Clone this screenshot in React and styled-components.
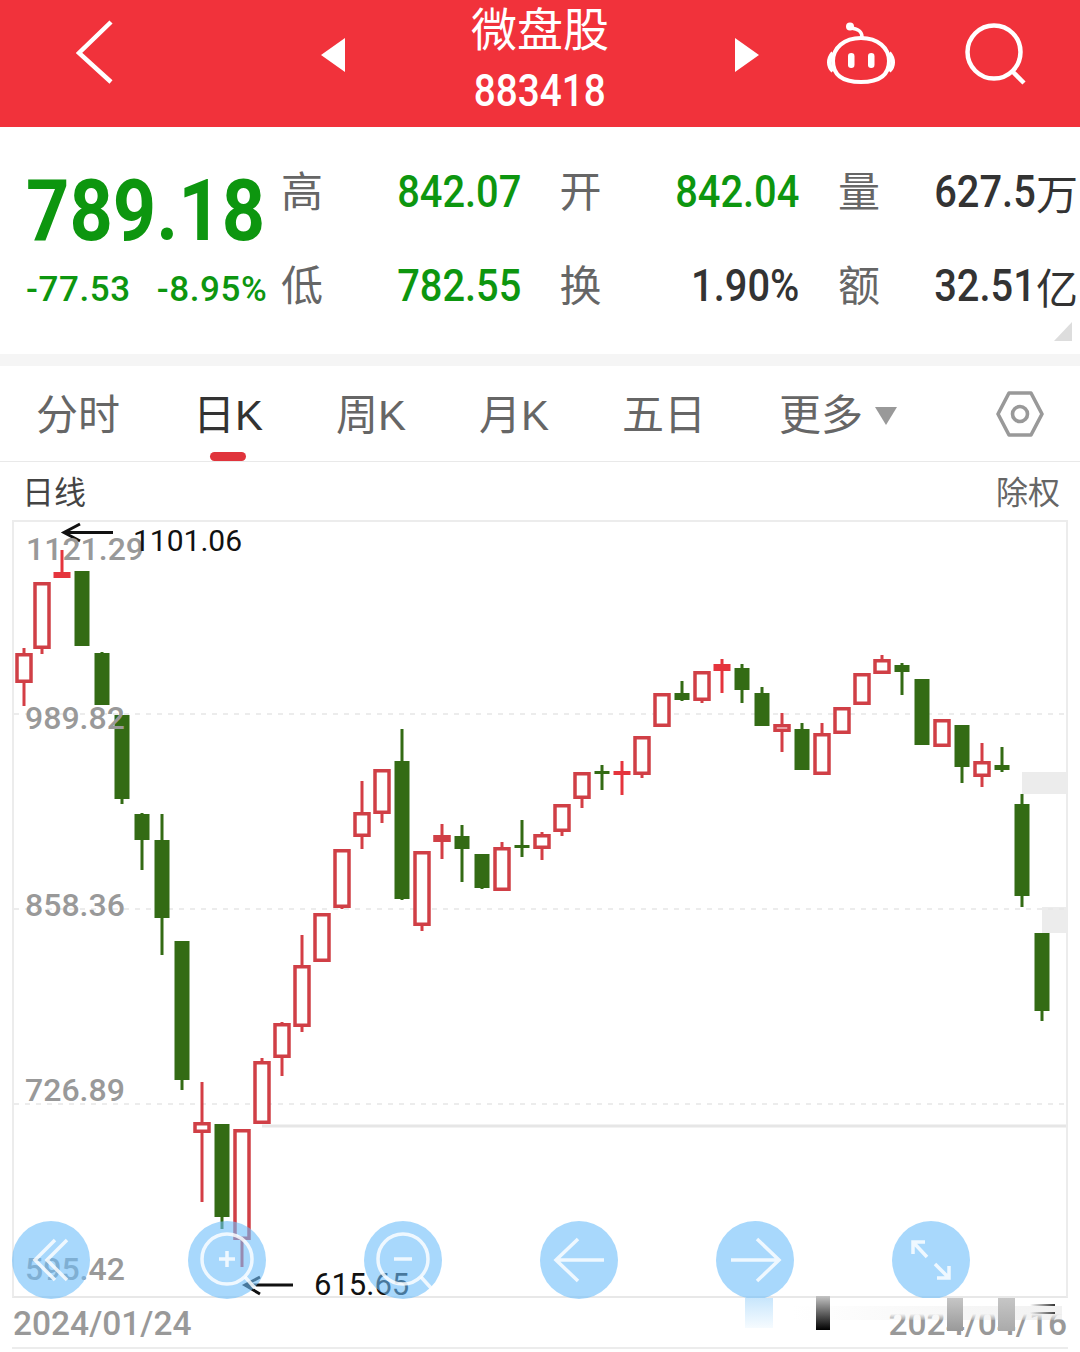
import React from "react";
import styled, { createGlobalStyle } from "styled-components";

const GlobalStyle = createGlobalStyle`
  html, body {
    margin: 0;
    padding: 0;
    background: #fff;
  }
  body {
    font-family: "Roboto", "Noto Sans CJK SC", sans-serif;
  }
`;

const CJK = `"Noto Sans CJK SC", sans-serif`;
const NUM = `"Roboto", "Noto Sans CJK SC", sans-serif`;
const GREEN = "#0d960f";

const Page = styled.div`
  width: 1080px;
  height: 1352px;
  overflow: hidden;
  background: #fff;
`;

// Header
const Header = styled.header`
  height: 127px;
  box-sizing: border-box;
  padding: 0 52px 0 76px;
  display: flex;
  align-items: flex-start;
  background: #f1323b;
  color: #fff;
`;
const BackSlot = styled.div`
  width: 245px;
  height: 104px;
  display: flex;
  align-items: center;
`;
const StockSwitcher = styled.div`
  width: 438px;
  height: 110px;
  display: flex;
  align-items: center;
  justify-content: space-between;
`;
const Arrow = styled.span`
  width: 0;
  height: 0;
  border-top: 17px solid transparent;
  border-bottom: 17px solid transparent;
  border-left: ${(props) => (props.$right ? "24px solid #fff" : "0")};
  border-right: ${(props) => (props.$right ? "0" : "24px solid #fff")};
`;
const TitleBlock = styled.div`
  width: 140px;
  padding-top: 1px;
  align-self: flex-start;
  display: flex;
  flex-direction: column;
  align-items: center;
`;
const Title = styled.div`
  font-family: ${CJK};
  font-size: 46px;
  line-height: 50px;
  white-space: nowrap;
`;
const Code = styled.div`
  margin-top: 15px;
  font-family: ${NUM};
  font-size: 45px;
  font-weight: 500;
  line-height: 50px;
  transform: scaleX(0.86);
`;
const Actions = styled.div`
  margin-left: auto;
  height: 108px;
  display: flex;
  align-items: center;
  gap: 68px;
`;

// Quote
const QuotePanel = styled.section`
  position: relative;
  height: 227px;
  display: flex;
  background: #fff;
`;
const PriceBlock = styled.div`
  flex: 0 0 255px;
  min-width: 0;
  margin-left: 26px;
  padding-top: 44px;
  color: ${GREEN};
`;
const Price = styled.div`
  font-family: ${NUM};
  font-size: 86px;
  font-weight: 700;
  line-height: 80px;
  white-space: nowrap;
  transform: scaleX(0.88);
  transform-origin: left center;
`;
const ChangeRow = styled.div`
  margin-top: 19px;
  display: flex;
  gap: 26px;
  font-family: ${NUM};
  font-size: 35px;
  font-weight: 500;
  letter-spacing: 0.6px;
  line-height: 40px;
  white-space: nowrap;
`;
const StatsGrid = styled.div`
  padding-top: 17px;
  display: grid;
  grid-template-columns: 42px 198px 80.5px 198px 80.5px 198px;
  grid-auto-rows: 94px;
  align-items: center;
`;
const StatLabel = styled.div`
  justify-self: end;
  margin-top: -5px;
  font-family: ${CJK};
  font-size: 42px;
  line-height: 50px;
  color: #666;
  white-space: nowrap;
`;
const StatValue = styled.div`
  display: flex;
  justify-content: flex-end;
  align-items: center;
  padding-top: 2px;
  color: ${(props) => (props.$green ? GREEN : "#333")};
  font-family: ${NUM};
  font-size: 45px;
  font-weight: 500;
  line-height: 50px;
  white-space: nowrap;
`;
const Squeezed = styled.span`
  display: inline-block;
  transform: scaleX(0.885);
  transform-origin: right center;
`;
const Unit = styled.span`
  font-family: ${CJK};
  font-size: 42px;
  font-weight: 400;
`;
const Corner = styled.span`
  position: absolute;
  right: 8px;
  bottom: 13px;
  width: 18px;
  height: 19px;
  background: #ddd;
  clip-path: polygon(100% 0, 100% 100%, 0 100%);
`;
const Divider = styled.div`
  height: 12px;
  background: #f5f5f5;
`;

// Tabs
const TabBar = styled.nav`
  height: 96px;
  box-sizing: border-box;
  padding: 5px 36px 0 36px;
  display: flex;
  align-items: center;
  gap: 73px;
  border-bottom: 1px solid #e9e9e9;
`;
const Tab = styled.div`
  position: relative;
  display: flex;
  align-items: center;
  font-family: "Liberation Sans", ${CJK};
  font-size: 42px;
  line-height: 50px;
  color: ${(props) => (props.$active ? "#333" : "#666")};
  white-space: nowrap;
`;
const TabMark = styled.span`
  position: absolute;
  left: 17px;
  bottom: -20px;
  width: 36px;
  height: 9px;
  border-radius: 5px;
  background: #e0343c;
`;
const Caret = styled.span`
  margin-left: 12px;
  width: 0;
  height: 0;
  border-left: 11px solid transparent;
  border-right: 11px solid transparent;
  border-top: 18px solid #999;
`;
const SettingsSlot = styled.div`
  margin-left: auto;
  margin-top: -5px;
  display: flex;
`;

// Sub header
const SubHeader = styled.div`
  height: 58px;
  box-sizing: border-box;
  padding: 0 20px 2px 22px;
  display: flex;
  align-items: center;
  justify-content: space-between;
  font-family: ${CJK};
  font-size: 32px;
  line-height: 40px;
  color: #444;
`;
const SubRight = styled.span`
  color: #666;
`;

// Chart
const ChartFrame = styled.section`
  position: relative;
  width: 1056px;
  height: 778px;
  box-sizing: border-box;
  margin-left: 12px;
  border: 2px solid #ececec;
  border-bottom-color: #e8e8e8;
`;
const ChartSvg = styled.svg`
  display: block;
`;
const AxisLabel = styled.span`
  position: absolute;
  left: ${(props) => props.$left}px;
  top: ${(props) => props.$top}px;
  font-family: ${NUM};
  font-size: 32px;
  font-weight: 500;
  line-height: 32px;
  color: #999;
`;
const Annotation = styled.span`
  position: absolute;
  left: ${(props) => props.$left}px;
  top: ${(props) => props.$top}px;
  font-family: ${NUM};
  font-size: ${(props) => props.$size}px;
  line-height: 32px;
  color: #111;
`;
const ToolRow = styled.div`
  position: absolute;
  left: -2px;
  bottom: -3px;
  display: flex;
  gap: 98px;
`;
const ToolButton = styled.div`
  width: 78px;
  height: 78px;
  border-radius: 50%;
  background: rgba(110, 190, 250, 0.6);
  display: flex;
`;

// Dates
const DateRow = styled.div`
  position: relative;
  width: 1056px;
  height: 51px;
  box-sizing: border-box;
  margin-left: 12px;
  padding: 8px 1px 0;
  display: flex;
  justify-content: space-between;
  border-bottom: 2px solid #ececec;
  font-family: ${NUM};
  font-size: 33.5px;
  font-weight: 500;
  line-height: 36px;
  color: #999;
`;
const SmearFade = styled.div`
  position: absolute;
  left: 720px;
  right: 0;
  top: 0;
  height: 22px;
  background: linear-gradient(to bottom, #fff 72%, rgba(255, 255, 255, 0));
`;
const SmearBar = styled.div`
  position: absolute;
  left: ${(props) => props.$left}px;
  top: ${(props) => props.$top}px;
  width: ${(props) => props.$width}px;
  height: ${(props) => props.$height}px;
  background: ${(props) => props.$bg};
`;

// colour, wick top, body top, body bottom, wick bottom
const candles = [
  ["r", 648, 653, 683, 706],
  ["r", 582, 582, 649, 654],
  ["s", 550, 572, 578, 578],
  ["g", 571, 571, 646, 646],
  ["g", 652, 653, 705, 705],
  ["g", 715, 715, 799, 804],
  ["g", 813, 814, 840, 870],
  ["g", 814, 840, 918, 955],
  ["g", 941, 941, 1080, 1090],
  ["r", 1082, 1122, 1133, 1202],
  ["g", 1124, 1124, 1217, 1229],
  ["r", 1129, 1129, 1240, 1267],
  ["r", 1058, 1061, 1124, 1124],
  ["r", 1022, 1023, 1058, 1076],
  ["r", 935, 965, 1027, 1032],
  ["r", 913, 913, 962, 962],
  ["r", 849, 849, 908, 909],
  ["r", 781, 812, 837, 849],
  ["r", 769, 769, 814, 823],
  ["g", 729, 761, 899, 900],
  ["r", 851, 851, 926, 931],
  ["r", 824, 835, 842, 859],
  ["g", 825, 836, 849, 882],
  ["g", 854, 854, 888, 889],
  ["r", 842, 847, 891, 891],
  ["g", 820, 845, 848, 857],
  ["r", 832, 834, 849, 860],
  ["r", 804, 804, 832, 836],
  ["r", 772, 772, 799, 808],
  ["g", 765, 771, 774, 790],
  ["s", 761, 771, 775, 795],
  ["r", 736, 736, 775, 778],
  ["r", 693, 693, 727, 727],
  ["g", 681, 693, 700, 701],
  ["r", 671, 671, 701, 703],
  ["s", 659, 664, 671, 693],
  ["g", 664, 668, 690, 703],
  ["g", 687, 693, 726, 726],
  ["r", 713, 724, 732, 752],
  ["g", 723, 729, 770, 770],
  ["r", 723, 733, 775, 775],
  ["r", 707, 707, 734, 734],
  ["r", 673, 673, 705, 705],
  ["r", 655, 659, 674, 674],
  ["g", 663, 665, 672, 695],
  ["g", 679, 679, 745, 745],
  ["r", 719, 719, 747, 747],
  ["g", 725, 725, 767, 783],
  ["r", 743, 761, 777, 787],
  ["g", 747, 765, 770, 772],
  ["g", 794, 804, 896, 907],
  ["g", 933, 933, 1011, 1021],
];

const Candle = ({ index, kind, wickTop, top, bottom, wickBottom }) => {
  const x = index === 0 ? 24 : 22 + index * 20;
  if (kind === "g") {
    return (
      <g fill="#336b14">
        <rect x={x - 1.5} y={wickTop} width="3" height={wickBottom - wickTop} />
        <rect x={x - 7.5} y={top} width="15" height={bottom - top} />
      </g>
    );
  }
  if (kind === "s") {
    return (
      <g fill="#e5343c">
        <rect x={x - 1.5} y={wickTop} width="3" height={wickBottom - wickTop} />
        <rect x={x - 8.5} y={top} width="17" height={bottom - top} />
      </g>
    );
  }
  return (
    <g>
      <rect x={x - 1.5} y={wickTop} width="3" height={wickBottom - wickTop} fill="#d43e45" />
      <rect
        x={x - 7}
        y={top + 1.75}
        width="14"
        height={bottom - top - 3.5}
        fill="#fff"
        stroke="#d03f46"
        strokeWidth="3.5"
      />
    </g>
  );
};

const BackIcon = () => (
  <svg width="38" height="64" viewBox="0 0 38 64" fill="none">
    <path d="M35 2 L3 33 L35 62" stroke="#fff" strokeWidth="4.5" />
  </svg>
);

const RobotIcon = () => (
  <svg width="70" height="66" viewBox="0 0 70 66" fill="none" stroke="#fff">
    <circle cx="24" cy="5.5" r="4" fill="#fff" stroke="none" />
    <path d="M25 7 C32 8 36 10 36 16" strokeWidth="3.5" />
    <path
      d="M35 17 C52 17 63 27 63 40 C63 55 52 61 35 61 C18 61 7 55 7 40 C7 27 18 17 35 17 Z"
      strokeWidth="4"
    />
    <path d="M7 32 C2 38 2 45 7 50 M63 32 C68 38 68 45 63 50" strokeWidth="4.5" />
    <rect x="22" y="32" width="6.5" height="15" rx="3.2" fill="#fff" stroke="none" />
    <rect x="42" y="32" width="6.5" height="15" rx="3.2" fill="#fff" stroke="none" />
  </svg>
);

const SearchIcon = () => (
  <svg width="64" height="62" viewBox="0 0 64 62" fill="none" stroke="#fff">
    <circle cx="30" cy="29" r="26.5" strokeWidth="4.5" />
    <path d="M48 48 L60 60" strokeWidth="4.5" />
  </svg>
);

const SettingsIcon = () => (
  <svg width="48" height="46" viewBox="0 0 48 46" fill="none" stroke="#999" strokeWidth="3.6">
    <path d="M13 2 H35 L46 23 L35 44 H13 L2 23 Z" strokeLinejoin="round" />
    <circle cx="24" cy="23" r="7.5" />
  </svg>
);

const ToolIcon = ({ children }) => (
  <svg
    width="78"
    height="78"
    viewBox="0 0 78 78"
    fill="none"
    stroke="rgba(255,255,255,0.82)"
    strokeWidth="3.5"
  >
    {children}
  </svg>
);

const tools = [
  <path key="rewind" d="M43 19 L23 39 L43 59 M55 19 L35 39 L55 59" />,
  <g key="in">
    <circle cx="39" cy="38" r="25" />
    <path d="M57 56 L67 67 M31 38 H47 M39 30 V46" />
  </g>,
  <g key="out">
    <circle cx="39" cy="38" r="25" />
    <path d="M57 56 L67 67 M30 38 H48" />
  </g>,
  <path key="left" d="M64 39 H16 M38 18 L16 39 L38 60" />,
  <path key="right" d="M15 39 H63 M41 18 L63 39 L41 60" />,
  <path key="expand" d="M21 21 L35 36 M21 33 V21 H33 M43 43 L57 57 M45 57 H57 V45" />,
];

const axisLabels = [
  ["1121.29", 12, 11],
  ["989.82", 11, 180],
  ["858.36", 11, 367],
  ["726.89", 11, 552],
  ["595.42", 11, 731],
];

const smears = [
  { left: 733, top: 0, width: 28, height: 30, bg: "linear-gradient(to bottom, #c8e6fc, rgba(220,240,254,0.25))" },
  { left: 780, top: 8, width: 270, height: 14, bg: "linear-gradient(to right, rgba(225,225,225,0), rgba(215,215,215,0.35))" },
  { left: 804, top: -2, width: 14, height: 34, bg: "linear-gradient(to bottom, #c4c4c4, #000)" },
  { left: 935, top: 0, width: 16, height: 33, bg: "linear-gradient(to bottom, #c6c6c6, #999)" },
  { left: 986, top: 0, width: 17, height: 33, bg: "linear-gradient(to bottom, #c6c6c6, #aaa)" },
  { left: 1018, top: 6, width: 25, height: 2, bg: "linear-gradient(to right, rgba(60,60,60,0), #333)" },
  { left: 1018, top: 14, width: 25, height: 2, bg: "linear-gradient(to right, rgba(60,60,60,0), #444)" },
];

const App = () => {
  return (
    <Page>
      <GlobalStyle />
      <Header>
        <BackSlot>
          <BackIcon />
        </BackSlot>
        <StockSwitcher>
          <Arrow />
          <TitleBlock>
            <Title>微盘股</Title>
            <Code>883418</Code>
          </TitleBlock>
          <Arrow $right />
        </StockSwitcher>
        <Actions>
          <RobotIcon />
          <SearchIcon />
        </Actions>
      </Header>

      <QuotePanel>
        <PriceBlock>
          <Price>789.18</Price>
          <ChangeRow>
            <span>-77.53</span>
            <span>-8.95%</span>
          </ChangeRow>
        </PriceBlock>
        <StatsGrid>
          <StatLabel>高</StatLabel>
          <StatValue $green><Squeezed>842.07</Squeezed></StatValue>
          <StatLabel>开</StatLabel>
          <StatValue $green><Squeezed>842.04</Squeezed></StatValue>
          <StatLabel>量</StatLabel>
          <StatValue><Squeezed>627.5</Squeezed><Unit>万</Unit></StatValue>
          <StatLabel>低</StatLabel>
          <StatValue $green><Squeezed>782.55</Squeezed></StatValue>
          <StatLabel>换</StatLabel>
          <StatValue><Squeezed>1.90%</Squeezed></StatValue>
          <StatLabel>额</StatLabel>
          <StatValue><Squeezed>32.51</Squeezed><Unit>亿</Unit></StatValue>
        </StatsGrid>
        <Corner />
      </QuotePanel>
      <Divider />

      <TabBar>
        <Tab>分时</Tab>
        <Tab $active>
          日K
          <TabMark />
        </Tab>
        <Tab>周K</Tab>
        <Tab>月K</Tab>
        <Tab>五日</Tab>
        <Tab>
          更多
          <Caret />
        </Tab>
        <SettingsSlot>
          <SettingsIcon />
        </SettingsSlot>
      </TabBar>

      <SubHeader>
        <span>日线</span>
        <SubRight>除权</SubRight>
      </SubHeader>

      <ChartFrame>
        <ChartSvg width="1052" height="774" viewBox="14 522 1052 774">
          <rect x="1022" y="772" width="46" height="22" fill="#ececec" />
          <rect x="1042" y="907" width="26" height="26" fill="#ececec" />
          <g stroke="#e6e6e6" strokeWidth="1.5" strokeDasharray="5 6">
            <line x1="14" x2="1066" y1="714" y2="714" />
            <line x1="14" x2="1066" y1="909" y2="909" />
            <line x1="14" x2="1066" y1="1104" y2="1104" />
          </g>
          <line x1="262" x2="1066" y1="1126" y2="1126" stroke="#e6e6e6" strokeWidth="3" />
          {candles.map(([kind, wickTop, top, bottom, wickBottom], index) => (
            <Candle
              key={index}
              index={index}
              kind={kind}
              wickTop={wickTop}
              top={top}
              bottom={bottom}
              wickBottom={wickBottom}
            />
          ))}
          <g stroke="#111" strokeWidth="3" fill="none">
            <path d="M113 532.5 H64 M80 524 L64 532.5 L80 541" />
            <path d="M293 1285 H245 M260 1277 L245 1285 L260 1294" />
          </g>
        </ChartSvg>
        {axisLabels.map(([text, left, top]) => (
          <AxisLabel key={text} $left={left} $top={top}>
            {text}
          </AxisLabel>
        ))}
        <Annotation $left={119} $top={3} $size={30}>1101.06</Annotation>
        <Annotation $left={300} $top={747} $size={31}>615.65</Annotation>
        <ToolRow>
          {tools.map((icon, index) => (
            <ToolButton key={index}>
              <ToolIcon>{icon}</ToolIcon>
            </ToolButton>
          ))}
        </ToolRow>
      </ChartFrame>

      <DateRow>
        <span>2024/01/24</span>
        <span>2024/04/16</span>
        <SmearFade />
        {smears.map((bar) => (
          <SmearBar
            key={`${bar.left}-${bar.top}`}
            $left={bar.left}
            $top={bar.top}
            $width={bar.width}
            $height={bar.height}
            $bg={bar.bg}
          />
        ))}
      </DateRow>
    </Page>
  );
};

export default App;
